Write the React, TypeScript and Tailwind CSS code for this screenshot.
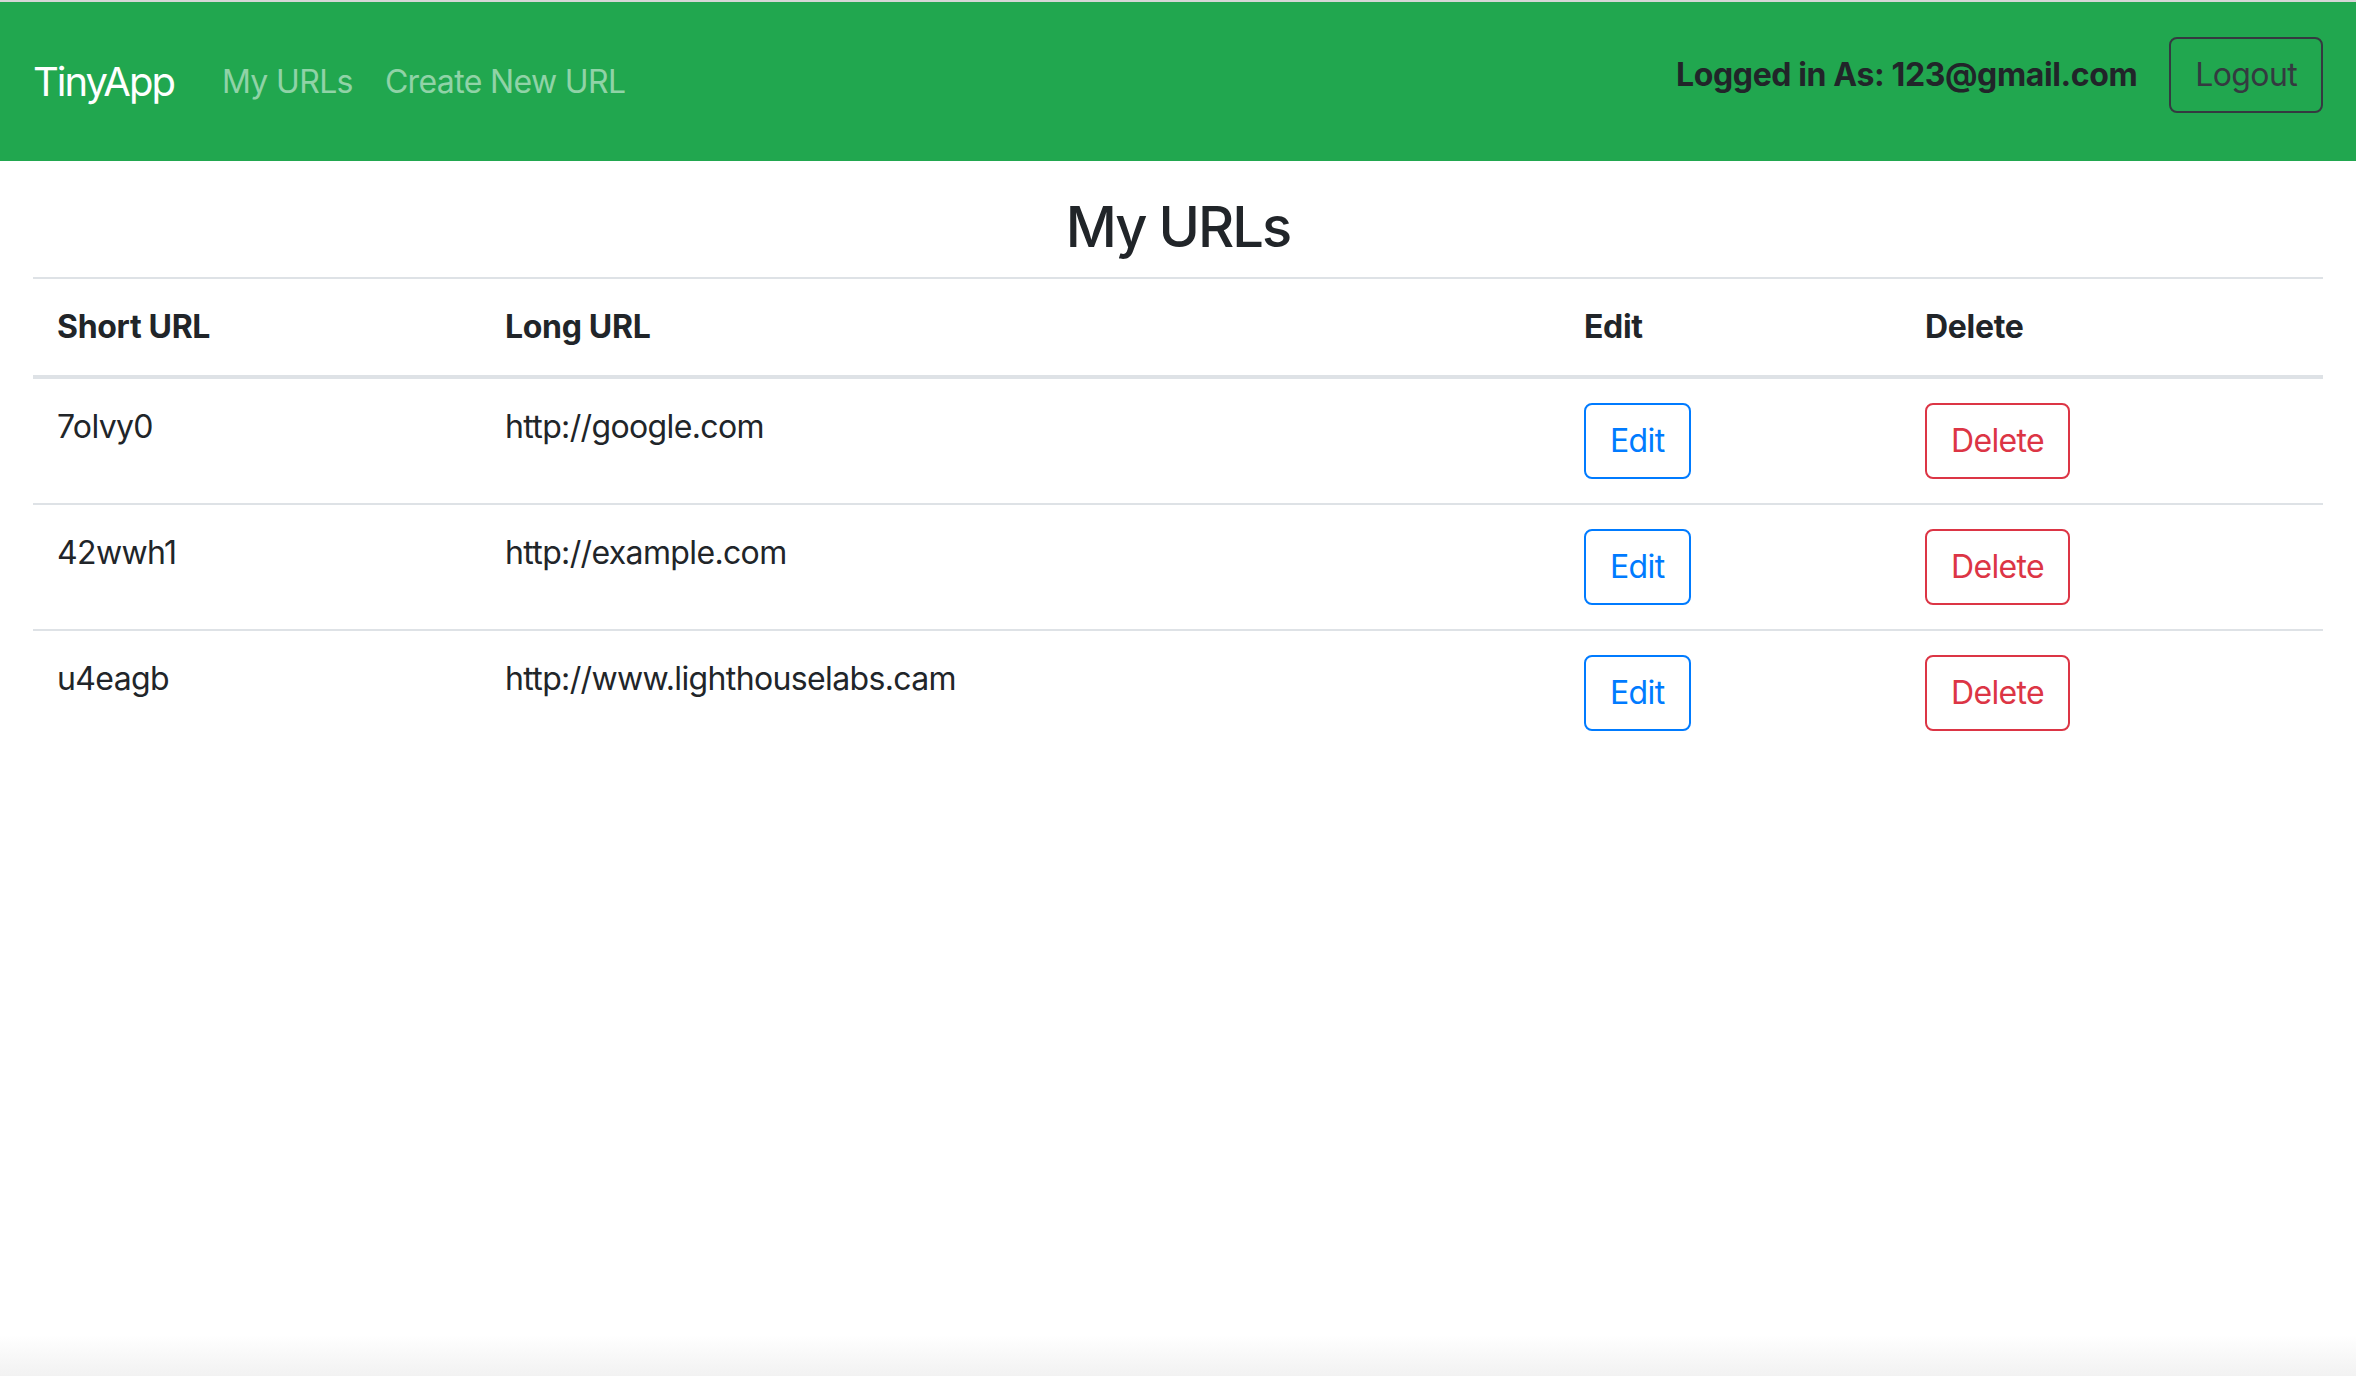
import React from 'react';

const urls = [
  { short: '7olvy0', long: 'http://google.com' },
  { short: '42wwh1', long: 'http://example.com' },
  { short: 'u4eagb', long: 'http://www.lighthouselabs.cam' },
];

const Navbar: React.FC = () => {
  return (
    <nav className="h-[159px] bg-[#21a74f] flex items-center justify-between pl-[33px] pr-[33px]">
      <div className="flex items-center">
        <a className="text-[40px] leading-[60px] tracking-[-0.05em] text-white mr-[32px]">TinyApp</a>
        <a className="text-[32px] leading-[48px] tracking-[-0.02em] text-white/50 px-[16px]">My URLs</a>
        <a className="text-[32px] leading-[48px] tracking-[-0.02em] text-white/50 px-[16px]">Create New URL</a>
      </div>
      <div className="flex items-center -mt-[14px]">
        <span className="text-[32px] leading-[48px] font-bold tracking-[-0.012em] text-[#212529] mr-[32px]">
          Logged in As: 123@gmail.com
        </span>
        <button className="text-[32px] leading-[48px] tracking-[-0.02em] text-[#343a40] border-2 border-[#343a40] rounded-[8px] px-[24px] py-[12px]">
          Logout
        </button>
      </div>
    </nav>
  );
};

export default function App() {
  return (
    <div
      className="min-h-[1376px] bg-[linear-gradient(to_bottom,#ffffff_0%,#ffffff_97%,#f2f2f2_100%)] text-[#212529]"
      style={{ fontFamily: 'Inter, "Noto Sans", sans-serif' }}
    >
      <div className="h-[2px] bg-[#d6d6d6]" />
      <Navbar />
      <main className="px-[33px]">
        <h3 className="text-[56px] leading-[67px] font-medium tracking-[-0.035em] text-center mt-[33px] mb-[16px]">
          My URLs
        </h3>
        <table className="w-full border-collapse text-[32px] leading-[48px] tracking-[-0.02em]">
          <colgroup>
            <col className="w-[448px]" />
            <col className="w-[1079px]" />
            <col className="w-[341px]" />
            <col />
          </colgroup>
          <thead>
            <tr>
              <th className="text-left font-bold tracking-[-0.01em] p-[24px] border-t-2 border-b-4 border-[#dee2e6]">Short URL</th>
              <th className="text-left font-bold tracking-[-0.01em] p-[24px] border-t-2 border-b-4 border-[#dee2e6]">Long URL</th>
              <th className="text-left font-bold tracking-[-0.01em] p-[24px] border-t-2 border-b-4 border-[#dee2e6]">Edit</th>
              <th className="text-left font-bold tracking-[-0.01em] p-[24px] border-t-2 border-b-4 border-[#dee2e6]">Delete</th>
            </tr>
          </thead>
          <tbody>
            {urls.map((u, i) => (
              <tr key={u.short} className={i > 0 ? 'border-t-2 border-[#dee2e6]' : ''}>
                <td className="p-[24px] align-top">{u.short}</td>
                <td className="p-[24px] align-top">{u.long}</td>
                <td className="p-[24px] align-top">
                  <button className="text-[#007bff] border-2 border-[#007bff] rounded-[8px] px-[24px] py-[12px] leading-[48px]">
                    Edit
                  </button>
                </td>
                <td className="p-[24px] align-top">
                  <button className="text-[#dc3545] border-2 border-[#dc3545] rounded-[8px] px-[24px] py-[12px] leading-[48px]">
                    Delete
                  </button>
                </td>
              </tr>
            ))}
          </tbody>
        </table>
      </main>
    </div>
  );
}
